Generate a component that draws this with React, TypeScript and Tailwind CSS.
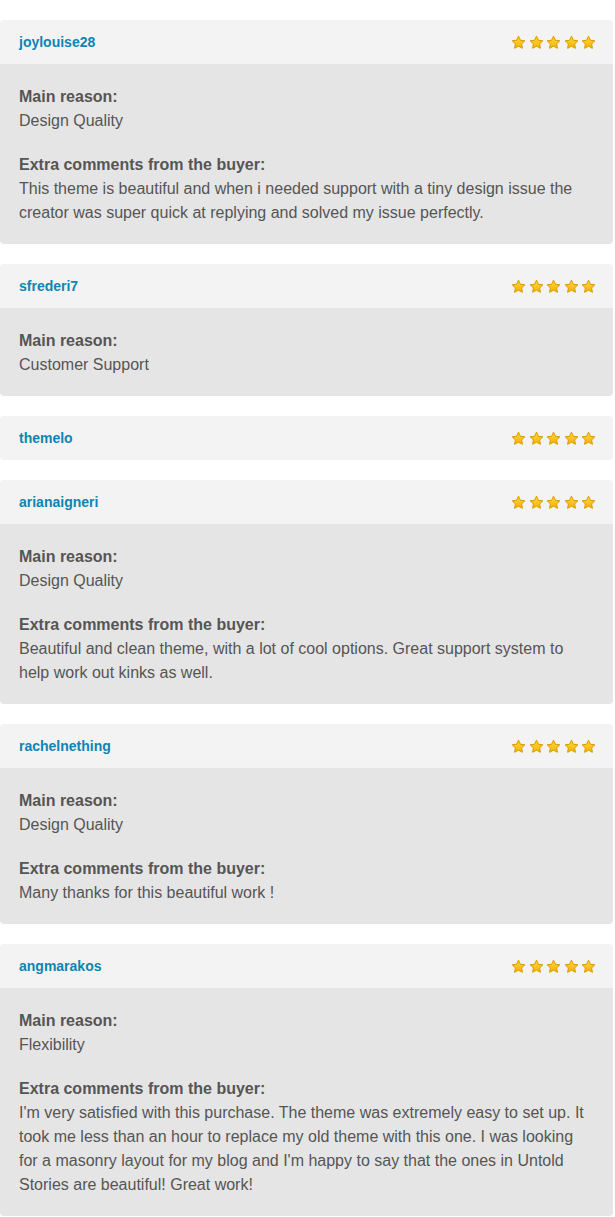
import React from "react";

type Review = {
  user: string;
  reason?: string;
  comment?: string;
};

const reviews: Review[] = [
  {
    user: "joylouise28",
    reason: "Design Quality",
    comment:
      "This theme is beautiful and when i needed support with a tiny design issue the creator was super quick at replying and solved my issue perfectly.",
  },
  { user: "sfrederi7", reason: "Customer Support" },
  { user: "themelo" },
  {
    user: "arianaigneri",
    reason: "Design Quality",
    comment:
      "Beautiful and clean theme, with a lot of cool options. Great support system to help work out kinks as well.",
  },
  {
    user: "rachelnething",
    reason: "Design Quality",
    comment: "Many thanks for this beautiful work !",
  },
  {
    user: "angmarakos",
    reason: "Flexibility",
    comment:
      "I'm very satisfied with this purchase. The theme was extremely easy to set up. It took me less than an hour to replace my old theme with this one. I was looking for a masonry layout for my blog and I'm happy to say that the ones in Untold Stories are beautiful! Great work!",
  },
];

function Star() {
  return (
    <svg width="15" height="15" viewBox="0 0 24 24">
      <defs>
        <linearGradient id="sg" x1="0" y1="0" x2="0" y2="1">
          <stop offset="0" stopColor="#ffd83a" />
          <stop offset="1" stopColor="#f5b400" />
        </linearGradient>
      </defs>
      <path
        d="M12 1.8l3.1 6.6 7.1.9-5.2 4.9 1.3 7.1L12 17.8l-6.3 3.5 1.3-7.1-5.2-4.9 7.1-.9z"
        fill="url(#sg)"
        stroke="#d99a00"
        strokeWidth="1.6"
        strokeLinejoin="round"
      />
    </svg>
  );
}

export default function App() {
  return (
    <div
      className="bg-white pt-5 pr-[2px] flex flex-col gap-5 text-[#555555]"
      style={{ fontFamily: '"Liberation Sans", Arial, Helvetica, sans-serif' }}
    >
      {reviews.map((r) => (
        <div key={r.user} className="rounded-[4px] overflow-hidden">
          <div className="h-[44px] bg-[#f3f3f3] flex items-center justify-between pl-[19px] pr-[17px]">
            <span className="text-[14px] font-bold text-[#0c84b6]">{r.user}</span>
            <div className="flex gap-[2.5px]">
              <Star />
              <Star />
              <Star />
              <Star />
              <Star />
            </div>
          </div>
          {r.reason && (
            <div className="bg-[#e5e5e5] px-[19px] pt-[21px] pb-[19px] text-[16px] leading-[24px] flex flex-col gap-5">
              <div>
                <div className="font-bold">Main reason:</div>
                <div>{r.reason}</div>
              </div>
              {r.comment && (
                <div>
                  <div className="font-bold">Extra comments from the buyer:</div>
                  <div>{r.comment}</div>
                </div>
              )}
            </div>
          )}
        </div>
      ))}
    </div>
  );
}
